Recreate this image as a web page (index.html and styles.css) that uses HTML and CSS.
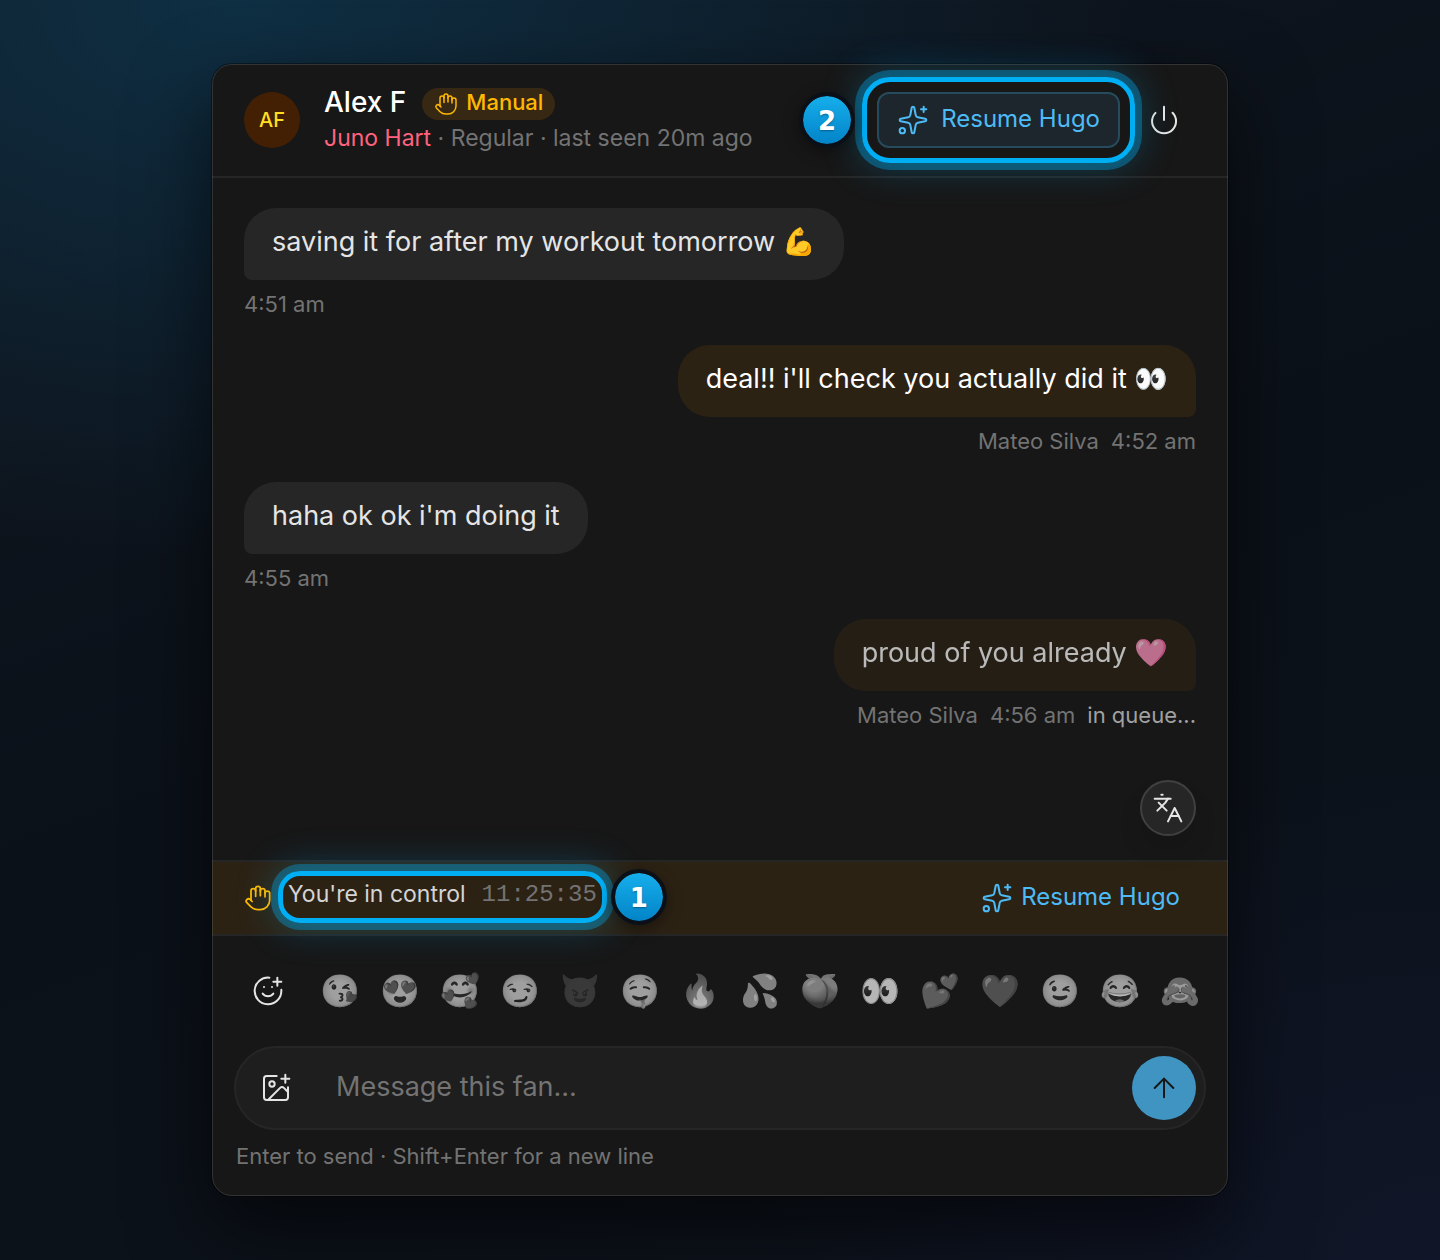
FILE: index.html
```html
<!DOCTYPE html>
<html lang="en">
<head>
  <meta charset="UTF-8">
  <meta name="viewport" content="width=device-width, initial-scale=1.0">
  <title>Chat with Alex F</title>
  <link rel="stylesheet" href="styles.css">
</head>
<body>

<!-- shared icon shapes -->
<svg class="sprite" aria-hidden="true">
  <symbol id="i-hand" viewBox="0 0 24 24">
    <path d="M18 11V6a2 2 0 0 0-4 0"/>
    <path d="M14 10V4a2 2 0 0 0-4 0v2"/>
    <path d="M10 10.500V6a2 2 0 0 0-4 0v8"/>
    <path d="M18 8a2 2 0 1 1 4 0v6a8 8 0 0 1-8 8h-2c-2.800 0-4.500-.860-5.990-2.340l-3.600-3.600a2 2 0 0 1 2.830-2.820L7 15"/>
  </symbol>
  <symbol id="i-sparkles" viewBox="0 0 24 24">
    <path d="M11.017 2.814a1 1 0 0 1 1.966 0l1.051 5.558a2 2 0 0 0 1.594 1.594l5.558 1.051a1 1 0 0 1 0 1.966l-5.558 1.051a2 2 0 0 0-1.594 1.594l-1.051 5.558a1 1 0 0 1-1.966 0l-1.051-5.558a2 2 0 0 0-1.594-1.594l-5.558-1.051a1 1 0 0 1 0-1.966l5.558-1.051a2 2 0 0 0 1.594-1.594z"/>
    <path d="M20 2v4M22 4h-4"/>
    <circle cx="4" cy="20" r="2"/>
  </symbol>
</svg>

<main class="chat">
  <header class="chat-header">
    <div class="avatar">AF</div>
    <div class="who">
      <div class="who-top">
        <h1 class="name">Alex F</h1>
        <span class="mode"><svg class="icon icon-sm"><use href="#i-hand"/></svg><span class="label">Manual</span></span>
      </div>
      <p class="who-sub"><span class="creator">Juno Hart</span> · Regular · last seen 20m ago</p>
    </div>
    <div class="header-actions">
      <button class="resume resume-outlined">
        <svg class="icon"><use href="#i-sparkles"/></svg>
        <span class="label">Resume Hugo</span>
        <span class="ring ring-wide"></span>
        <span class="step step-left">2</span>
      </button>
      <button class="icon-btn" aria-label="Power">
        <svg class="icon" viewBox="0 0 24 24"><path d="M12 2v10"/><path d="M18.400 6.600a9 9 0 1 1-12.770.040"/></svg>
      </button>
    </div>
  </header>

  <section class="messages">
    <article class="message">
      <p class="bubble">saving it for after my workout tomorrow 💪</p>
      <p class="meta"><span>4:51 am</span></p>
    </article>
    <article class="message sent">
      <p class="bubble">deal!! i'll check you actually did it 👀</p>
      <p class="meta"><span>Mateo Silva</span><span>4:52 am</span></p>
    </article>
    <article class="message">
      <p class="bubble">haha ok ok i'm doing it</p>
      <p class="meta"><span>4:55 am</span></p>
    </article>
    <article class="message sent queued">
      <p class="bubble">proud of you already 🩷</p>
      <p class="meta"><span>Mateo Silva</span><span>4:56 am</span><span class="queue">in queue...</span></p>
    </article>
    <button class="translate" aria-label="Translate">
      <svg class="icon" viewBox="0 0 24 24"><path d="m5 8 6 6"/><path d="m4 14 6-6 2-3"/><path d="M2 5h12"/><path d="M7 2h1"/><path d="m22 22-5-10-5 10"/><path d="M14 18h6"/></svg>
    </button>
  </section>

  <section class="control-bar">
    <svg class="icon icon-md hand"><use href="#i-hand"/></svg>
    <div class="status">
      <span class="label">You're in control</span>
      <span class="label timer">11:25:35</span>
      <span class="ring ring-tight"></span>
      <span class="step step-right">1</span>
    </div>
    <button class="resume">
      <svg class="icon"><use href="#i-sparkles"/></svg>
      <span class="label">Resume Hugo</span>
    </button>
  </section>

  <section class="reactions">
    <button class="icon-btn" aria-label="Add emoji">
      <svg class="icon" viewBox="0 0 24 24"><path d="M22 11v1a10 10 0 1 1-9-10"/><path d="M8 14s1.500 2 4 2 4-2 4-2"/><path d="M9 9h.01"/><path d="M15 9h.01"/><path d="M16 5h6"/><path d="M19 2v6"/></svg>
    </button>
    <div class="emoji-list">
      <button class="emoji">😘</button>
      <button class="emoji">😍</button>
      <button class="emoji">🥰</button>
      <button class="emoji">😏</button>
      <button class="emoji">😈</button>
      <button class="emoji">🤤</button>
      <button class="emoji">🔥</button>
      <button class="emoji">💦</button>
      <button class="emoji">🍑</button>
      <button class="emoji">👀</button>
      <button class="emoji">💕</button>
      <button class="emoji">❤️</button>
      <button class="emoji">😉</button>
      <button class="emoji">😂</button>
      <button class="emoji">🙈</button>
    </div>
  </section>

  <form class="composer">
    <div class="composer-box">
      <button type="button" class="icon-btn" aria-label="Attach image">
        <svg class="icon" viewBox="0 0 24 24"><path d="M16 5h6"/><path d="M19 2v6"/><path d="M21 11.500V19a2 2 0 0 1-2 2H5a2 2 0 0 1-2-2V5a2 2 0 0 1 2-2h7.500"/><path d="m21 15-3.086-3.086a2 2 0 0 0-2.828 0L6 21"/><circle cx="9" cy="9" r="2"/></svg>
      </button>
      <input class="composer-input" type="text" placeholder="Message this fan..." aria-label="Message this fan">
      <button type="button" class="send" aria-label="Send">
        <svg class="icon" viewBox="0 0 24 24"><path d="m5 12 7-7 7 7"/><path d="M12 19V5"/></svg>
      </button>
    </div>
    <p class="hint">Enter to send · Shift+Enter for a new line</p>
  </form>
</main>

</body>
</html>
```
FILE: styles.css
```css
* {
  box-sizing: border-box;
}

body {
  margin: 0;
  min-height: 100vh;
  padding: 64px;
  font-family: "Inter", "Noto Color Emoji", sans-serif;
  color: #e5e5e5;
  background:
    radial-gradient(900px 560px at 17% 0, rgba(14, 68, 98, 0.55), transparent),
    radial-gradient(700px 500px at 100% 100%, rgba(24, 30, 72, 0.3), transparent),
    linear-gradient(160deg, #10161f, #0b1119 50%, #0d121b);
}

h1,
p {
  margin: 0;
  font-weight: 400;
}

button {
  padding: 0;
  border: none;
  background: none;
  color: inherit;
  font-family: inherit;
  cursor: pointer;
}

.sprite {
  position: absolute;
  width: 0;
  height: 0;
}

.icon {
  width: 32px;
  height: 32px;
  flex: none;
  display: block;
  fill: none;
  stroke: currentColor;
  stroke-width: 1.5;
  stroke-linecap: round;
  stroke-linejoin: round;
}

.icon-md {
  width: 28px;
  height: 28px;
}

.icon-sm {
  width: 24px;
  height: 24px;
}

.icon-btn {
  display: flex;
  align-items: center;
  justify-content: center;
  width: 56px;
  height: 56px;
  flex: none;
}

.label {
  padding-bottom: 4px;
}

/* card */
.chat {
  position: relative;
  max-width: 1016px;
  margin: 0 auto;
  border-radius: 20px;
  background: #171717;
  box-shadow: 0 0 0 1px rgba(0, 0, 0, 0.4), 0 32px 80px rgba(0, 0, 0, 0.6);
}

.chat::after {
  content: "";
  position: absolute;
  inset: 0;
  border: 1px solid rgba(255, 255, 255, 0.12);
  border-radius: 20px;
  pointer-events: none;
}

/* header */
.chat-header {
  display: flex;
  align-items: center;
  gap: 24px;
  height: 114px;
  padding: 0 36px 0 32px;
  border-bottom: 2px solid #262626;
}

.avatar {
  width: 56px;
  height: 56px;
  flex: none;
  border-radius: 50%;
  background: #432004;
  color: #ffdf20;
  font-size: 20px;
  font-weight: 500;
  line-height: 56px;
  text-align: center;
}

.who {
  flex: 1;
}

.who-top {
  display: flex;
  align-items: flex-end;
  gap: 16px;
}

.name {
  color: #fff;
  font-size: 28px;
  font-weight: 500;
  line-height: 36px;
}

.mode {
  display: flex;
  align-items: center;
  gap: 8px;
  height: 32px;
  padding: 0 12px;
  border-radius: 16px;
  background: #372814;
  color: #ffb900;
  font-size: 22px;
  font-weight: 500;
}

.who-sub {
  color: #737373;
  font-size: 23px;
  line-height: 36px;
}

.creator {
  color: #ff637e;
}

.header-actions {
  display: flex;
  align-items: center;
  gap: 16px;
}

.resume {
  position: relative;
  display: flex;
  align-items: center;
  gap: 8px;
  height: 56px;
  color: #4dbbf5;
  font-size: 24px;
  font-weight: 400;
}

.resume-outlined {
  gap: 12px;
  padding: 0 18px;
  border: 2px solid #264a5e;
  border-radius: 12px;
  background: #1d262c;
}

/* guide markers over the controls */
.ring {
  position: absolute;
  z-index: 1;
  border: 5px solid #00aef3;
  pointer-events: none;
  box-shadow: 0 0 0 7px rgba(0, 174, 243, 0.35), 0 0 36px 6px rgba(0, 174, 243, 0.25);
}

.ring-wide {
  inset: -17px;
  border-radius: 28px;
}

.ring-tight {
  inset: -4px -10px;
  border-radius: 22px;
}

.step {
  position: absolute;
  z-index: 2;
  top: 50%;
  width: 56px;
  height: 56px;
  margin-top: -28px;
  border: 4px solid #0b1018;
  border-radius: 50%;
  background: linear-gradient(#16aeec, #0284c7) padding-box;
  box-shadow: 0 4px 16px rgba(0, 0, 0, 0.4);
  color: #fff;
  font-family: "DejaVu Sans", sans-serif;
  font-size: 26px;
  font-weight: 700;
  line-height: 50px;
  text-align: center;
  text-shadow: 0 1px 2px rgba(0, 0, 0, 0.35);
}

.step-left {
  right: 100%;
  margin-right: 24px;
}

.step-right {
  left: 100%;
  margin-left: 14px;
}

/* messages */
.messages {
  display: flex;
  flex-direction: column;
  gap: 25px;
  padding: 30px 32px 24px;
}

.message {
  display: flex;
  flex-direction: column;
  align-items: flex-start;
  gap: 8px;
}

.bubble {
  padding: 14px 28px 18px;
  border-radius: 32px 32px 32px 8px;
  background: #262626;
  color: #e5e5e5;
  font-size: 27px;
  line-height: 40px;
}

.meta {
  display: flex;
  gap: 12px;
  color: #737373;
  font-size: 22px;
  line-height: 32px;
}

.sent {
  align-items: flex-end;
}

.sent .bubble {
  border-radius: 32px 32px 8px 32px;
  background: #2c2214;
  color: #fff;
}

.queued .bubble {
  opacity: 0.7;
}

.queue {
  color: #a1a1a1;
}

.translate {
  display: flex;
  align-items: center;
  justify-content: center;
  align-self: flex-end;
  width: 56px;
  height: 56px;
  margin-top: 24px;
  border: 2px solid #404040;
  border-radius: 50%;
  background: #262626;
  box-shadow: 0 16px 24px rgba(0, 0, 0, 0.1);
}

/* manual control bar */
.control-bar {
  display: flex;
  align-items: center;
  height: 76px;
  padding: 0 48px 0 32px;
  border-top: 2px solid #262626;
  border-bottom: 2px solid #262626;
  background: #2c2214;
}

.hand {
  color: #ffb900;
}

.status {
  position: relative;
  display: flex;
  align-items: center;
  gap: 16px;
  height: 44px;
  margin: 0 auto 2px 16px;
  padding-bottom: 2px;
  color: #d4d4d4;
  font-size: 23px;
}

.timer {
  color: #737373;
  font-family: "Liberation Mono", monospace;
  font-size: 24px;
}

/* quick reactions */
.reactions {
  display: flex;
  align-items: center;
  gap: 14px;
  height: 110px;
  padding: 0 18px 0 28px;
}

.emoji-list {
  display: flex;
  flex: 1;
  justify-content: space-between;
}

.emoji {
  width: 60px;
  height: 60px;
  font-size: 32px;
  line-height: 60px;
  filter: grayscale(1);
  opacity: 0.7;
}

/* composer */
.composer {
  padding: 0 22px 24px;
}

.composer-box {
  display: flex;
  align-items: center;
  height: 84px;
  padding: 0 8px 0 12px;
  border: 2px solid #262626;
  border-radius: 42px;
  background: #1e1e1e;
}

.composer-input {
  flex: 1;
  min-width: 0;
  margin: 0 32px;
  padding: 0 0 4px;
  border: none;
  outline: none;
  background: none;
  color: #e5e5e5;
  font-family: inherit;
  font-size: 27px;
}

.composer-input::placeholder {
  color: #737373;
}

.send {
  display: flex;
  align-items: center;
  justify-content: center;
  width: 64px;
  height: 64px;
  flex: none;
  border-radius: 50%;
  background: #3f94c1;
  color: #171717;
}

.hint {
  padding: 10px 2px 0;
  color: #737373;
  font-size: 22px;
  line-height: 32px;
}
```
